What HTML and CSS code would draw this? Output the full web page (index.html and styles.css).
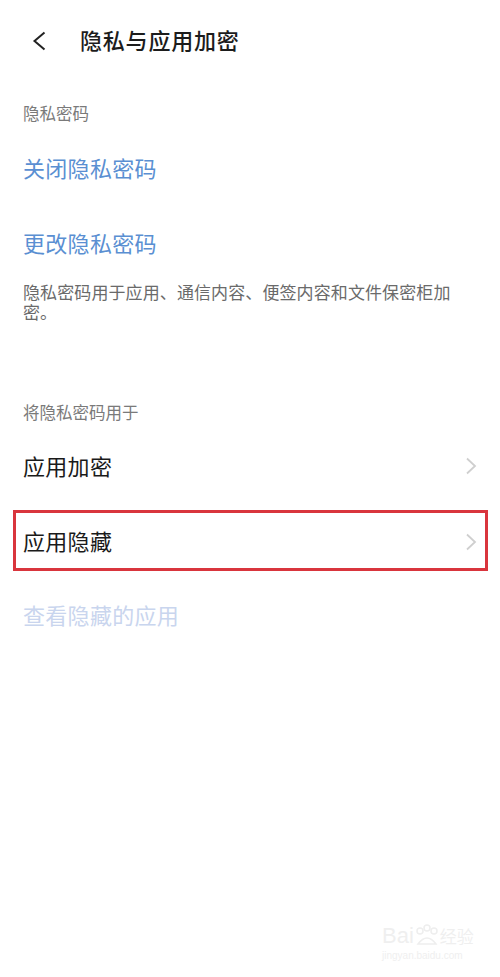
FILE: index.html
```html
<!DOCTYPE html>
<html lang="zh-CN">
<head>
	<meta charset="utf-8">
	<title>隐私与应用加密</title>
	<link rel="stylesheet" href="styles.css">
</head>

<body>
	<div id="pantalla">
		<header class="cabecera">
			<svg class="atras" width="14" height="20" viewBox="0 0 14 20">
				<path d="M12.5 1.5 L2.5 10 L12.5 18.5" fill="none" stroke="#222" stroke-width="2"/>
			</svg>
			<h1>隐私与应用加密</h1>
		</header>

		<section class="bloque">
			<p class="etiqueta primera">隐私密码</p>
			<p class="fila enlace">关闭隐私密码</p>
			<p class="fila enlace">更改隐私密码</p>
			<p class="nota">隐私密码用于应用、通信内容、便签内容和文件保密柜加密。</p>
		</section>

		<section class="bloque">
			<p class="etiqueta segunda">将隐私密码用于</p>
			<div class="fila opcion">
				<span>应用加密</span>
				<svg class="flecha" width="12" height="18" viewBox="0 0 12 18">
					<path d="M2 1.5 L10 9 L2 16.5" fill="none" stroke="#cfcfcf" stroke-width="1.8"/>
				</svg>
			</div>
			<div class="marcado">
				<div class="fila opcion">
					<span>应用隐藏</span>
					<svg class="flecha" width="12" height="18" viewBox="0 0 12 18">
						<path d="M2 1.5 L10 9 L2 16.5" fill="none" stroke="#cfcfcf" stroke-width="1.8"/>
					</svg>
				</div>
			</div>
			<p class="fila desactivado">查看隐藏的应用</p>
		</section>

		<div class="marca">
			<div class="marca-logo">
				<span>Bai</span>
				<svg width="26" height="24" viewBox="0 0 26 24">
					<circle cx="6" cy="7" r="3" fill="none" stroke="#eeeeee" stroke-width="1.5"/>
					<circle cx="13" cy="4" r="3" fill="none" stroke="#eeeeee" stroke-width="1.5"/>
					<circle cx="20" cy="7" r="3" fill="none" stroke="#eeeeee" stroke-width="1.5"/>
					<path d="M4 20 Q13 8 22 20 Z" fill="none" stroke="#eeeeee" stroke-width="1.5"/>
				</svg>
				<span>经验</span>
			</div>
			<div class="marca-url">jingyan.baidu.com</div>
		</div>
	</div>
</body>
</html>
```

FILE: styles.css
```css
*{
	margin: 0px;
	padding: 0px;
	box-sizing: border-box;
}
body{
	background-color: #FFF;
	font-family: "Noto Sans CJK SC", "Noto Sans", sans-serif;
}
#pantalla{
	position: relative;
	width: 500px;
	height: 977px;
	background-color: #FFF;
	overflow: hidden;
}
.cabecera{
	height: 76px;
	display: flex;
	align-items: center;
	padding-left: 32px;
	padding-top: 2px;
}
.cabecera .atras{
	margin-right: 34px;
	margin-top: 4px;
}
.cabecera h1{
	font-size: 22px;
	font-weight: 500;
	color: #1c1c1c;
	letter-spacing: 0.8px;
}
.etiqueta{
	font-size: 16.5px;
	color: #7a7a7a;
	padding-left: 23px;
	height: 34px;
	line-height: 34px;
}
.etiqueta.primera{
	margin-top: 20px;
}
.etiqueta.segunda{
	margin-top: 72px;
	height: 36px;
	line-height: 36px;
}
.fila{
	font-size: 22px;
	height: 75px;
	line-height: 75px;
	padding: 0px 23px;
	letter-spacing: 0.3px;
}
.enlace{
	color: #5a8fd2;
}
.enlace:first-of-type{
	line-height: 71px;
}
.nota{
	margin-top: 2px;
	padding: 0px 40px 0px 23px;
	font-size: 17px;
	line-height: 20px;
	color: #6a6a6a;
	letter-spacing: 0.1px;
}
.opcion{
	display: flex;
	align-items: center;
	justify-content: space-between;
	color: #1a1a1a;
	height: 70px;
}
.marcado{
	margin: 10px 12px 0px 13px;
	border: 3px solid #d9353d;
}
.marcado .opcion{
	height: 55px;
	padding: 0px 8px 0px 7px;
}
.flecha{
	margin-top: 2px;
}
.desactivado{
	color: #c9d5ee;
	margin-top: 7px;
	height: 72px;
	line-height: 72px;
}
/* marca de agua del pie */
.marca{
	position: absolute;
	left: 382px;
	top: 924px;
	color: #efefef;
	font-family: "Liberation Sans", sans-serif;
}
.marca-logo{
	display: flex;
	align-items: flex-end;
	font-size: 22px;
	line-height: 24px;
}
.marca-logo span:last-child{
	font-family: "Noto Sans CJK SC", sans-serif;
	font-size: 17px;
}
.marca-url{
	font-size: 10px;
	margin-top: 2px;
}
```
